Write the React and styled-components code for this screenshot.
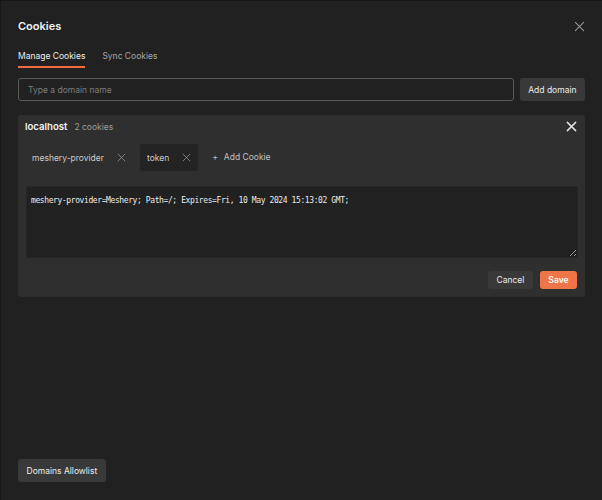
import styled, { createGlobalStyle } from "styled-components";

const GlobalStyle = createGlobalStyle`
  html, body {
    margin: 0;
    padding: 0;
    background: #161616;
  }
  body {
    font-family: Inter, "Noto Sans", sans-serif;
    -webkit-font-smoothing: antialiased;
  }
`;

const Modal = styled.div`
  box-sizing: border-box;
  margin: 1px 0 0 1px;
  width: 601px;
  height: 499px;
  background: #212121;
  display: flex;
  flex-direction: column;
  padding: 17px 17px 18px 17px;
  color: #e6e6e6;
`;

const Header = styled.div`
  display: flex;
  align-items: center;
  justify-content: space-between;
  height: 16px;
`;

const Title = styled.h1`
  margin: 0;
  font-size: 11px;
  font-weight: 600;
  color: #f2f2f2;
`;

const IconButton = styled.button`
  background: none;
  border: none;
  padding: 0;
  display: flex;
  cursor: pointer;
  color: ${(p) => p.$color || "#9a9a9a"};
`;

const Tabs = styled.div`
  display: flex;
  gap: 17px;
  margin-top: 17px;
`;

const Tab = styled.div`
  font-size: 8.5px;
  padding-bottom: 5px;
  color: ${(p) => (p.$active ? "#ececec" : "#a6a6a6")};
  border-bottom: 2px solid ${(p) => (p.$active ? "#f26b3a" : "transparent")};
`;

const DomainRow = styled.div`
  display: flex;
  gap: 6px;
  margin-top: 10px;
`;

const DomainInput = styled.input`
  flex: 1;
  box-sizing: border-box;
  height: 23px;
  background: transparent;
  border: 1px solid #5a5a5a;
  border-radius: 3px;
  padding: 0 9px;
  color: #e6e6e6;
  font-family: inherit;
  font-size: 8.5px;
  outline: none;
  &::placeholder {
    color: #7d7d7d;
  }
`;

const GreyButton = styled.button`
  box-sizing: border-box;
  height: ${(p) => p.$h || "23px"};
  padding: 0 8.5px;
  border: none;
  border-radius: 3px;
  background: #393939;
  color: #ececec;
  font-family: inherit;
  font-size: 8.5px;
  cursor: pointer;
`;

const Card = styled.div`
  margin-top: 14px;
  background: #2f2f2f;
  border-radius: 3px;
  padding: 4px 8px 8px 7px;
  display: flex;
  flex-direction: column;
`;

const CardHeader = styled.div`
  display: flex;
  align-items: center;
  justify-content: space-between;
  height: 14px;
`;

const Host = styled.div`
  display: flex;
  align-items: baseline;
  gap: 7px;
  font-size: 9.6px;
  font-weight: 600;
  color: #f2f2f2;
`;

const Count = styled.span`
  font-size: 8.5px;
  font-weight: 400;
  color: #9d9d9d;
`;

const Chips = styled.div`
  display: flex;
  align-items: center;
  margin-top: 11px;
`;

const Chip = styled.div`
  display: flex;
  align-items: center;
  gap: 13px;
  height: 27px;
  padding: 0 7px;
  border-radius: 3px;
  font-size: 8.5px;
  color: #cbcbcb;
  background: ${(p) => (p.$active ? "#232323" : "transparent")};
  margin-right: ${(p) => (p.$active ? "7px" : "7px")};
`;

const AddCookie = styled.div`
  display: flex;
  align-items: center;
  gap: 6px;
  font-size: 8.5px;
  color: #c0c0c0;
  padding: 0 7px;
  margin-top: -2px;
`;

const Editor = styled.textarea`
  margin-top: 15px;
  margin-left: 1px;
  box-sizing: border-box;
  height: 72px;
  width: 552px;
  background: #212121;
  border: 1px solid #262626;
  border-radius: 2px;
  padding: 9px 4px;
  color: #ececec;
  font-family: "DejaVu Sans Mono", "Liberation Mono", monospace;
  font-size: 8px;
  letter-spacing: -0.4px;
  resize: vertical;
  outline: none;
`;

const Actions = styled.div`
  display: flex;
  justify-content: flex-end;
  gap: 7px;
  margin-top: 13px;
`;

const SaveButton = styled(GreyButton)`
  background: #ef7447;
  color: #fff;
  font-weight: 600;
`;

const Footer = styled.div`
  margin-top: auto;
  display: flex;
`;

const Cross = ({ size = 12, stroke = 1.2 }) => (
  <svg width={size} height={size} viewBox="0 0 12 12" fill="none">
    <path
      d="M1.5 1.5L10.5 10.5M10.5 1.5L1.5 10.5"
      stroke="currentColor"
      strokeWidth={stroke}
      strokeLinecap="round"
    />
  </svg>
);

export default function App() {
  return (
    <>
      <GlobalStyle />
      <Modal>
        <Header>
          <Title>Cookies</Title>
          <IconButton>
            <Cross size={11} stroke={1.1} />
          </IconButton>
        </Header>

        <Tabs>
          <Tab $active>Manage Cookies</Tab>
          <Tab>Sync Cookies</Tab>
        </Tabs>

        <DomainRow>
          <DomainInput placeholder="Type a domain name" />
          <GreyButton>Add domain</GreyButton>
        </DomainRow>

        <Card>
          <CardHeader>
            <Host>
              localhost <Count>2 cookies</Count>
            </Host>
            <IconButton $color="#e0e0e0">
              <Cross size={11} stroke={1.6} />
            </IconButton>
          </CardHeader>

          <Chips>
            <Chip>
              meshery-provider
              <IconButton>
                <Cross size={9} stroke={1} />
              </IconButton>
            </Chip>
            <Chip $active>
              token
              <IconButton>
                <Cross size={9} stroke={1} />
              </IconButton>
            </Chip>
            <AddCookie>
              <span>+</span> Add Cookie
            </AddCookie>
          </Chips>

          <Editor defaultValue="meshery-provider=Meshery; Path=/; Expires=Fri, 10 May 2024 15:13:02 GMT;" />

          <Actions>
            <GreyButton $h="18px">Cancel</GreyButton>
            <SaveButton $h="18px">Save</SaveButton>
          </Actions>
        </Card>

        <Footer>
          <GreyButton>Domains Allowlist</GreyButton>
        </Footer>
      </Modal>
    </>
  );
}
